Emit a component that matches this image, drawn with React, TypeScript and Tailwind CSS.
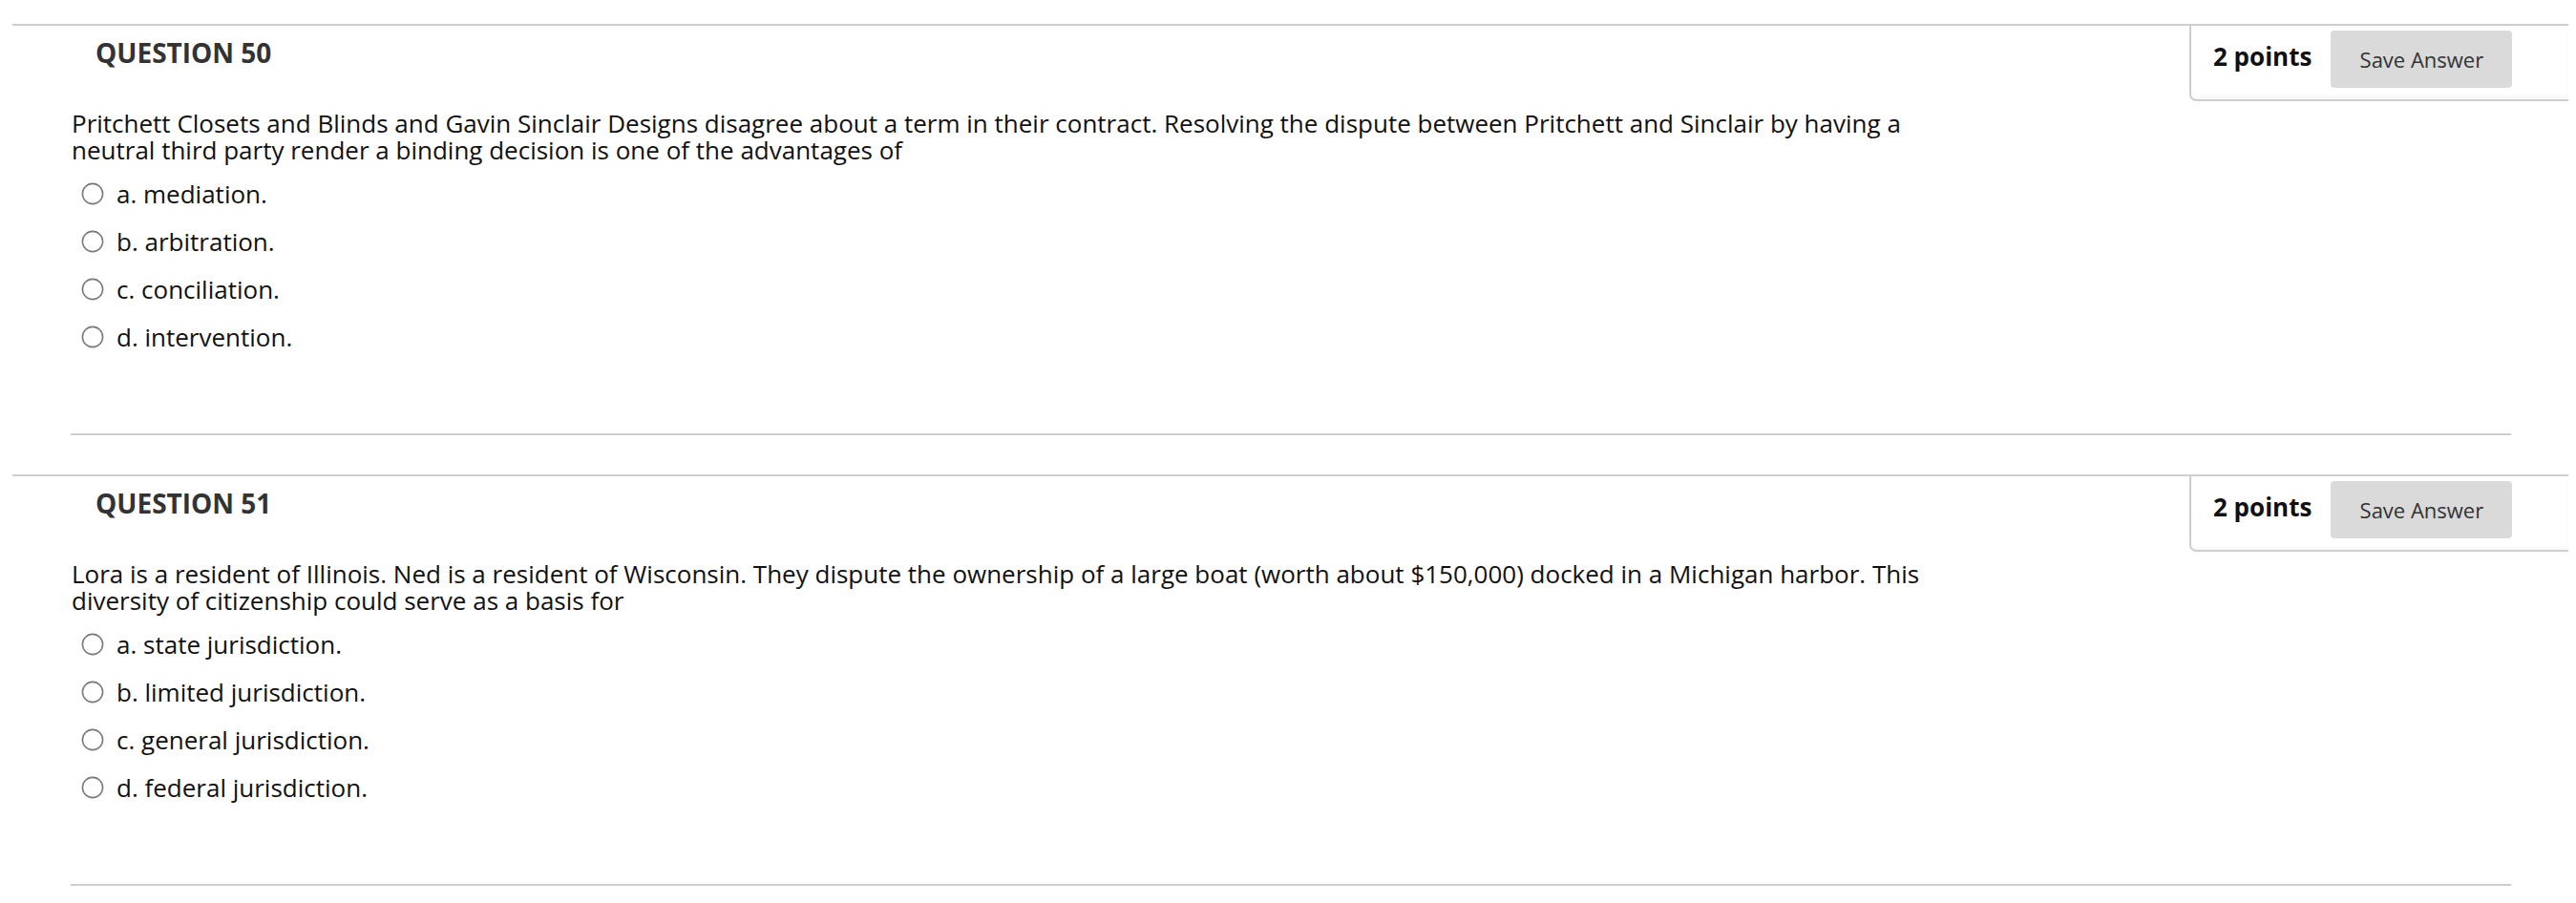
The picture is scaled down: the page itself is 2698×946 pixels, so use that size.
import React from "react";

type Q = { num: number; text: string; options: string[] };

const questions: Q[] = [
  {
    num: 50,
    text:
      "Pritchett Closets and Blinds and Gavin Sinclair Designs disagree about a term in their contract. Resolving the dispute between Pritchett and Sinclair by having a neutral third party render a binding decision is one of the advantages of",
    options: ["a. mediation.", "b. arbitration.", "c. conciliation.", "d. intervention."],
  },
  {
    num: 51,
    text:
      "Lora is a resident of Illinois. Ned is a resident of Wisconsin. They dispute the ownership of a large boat (worth about $150,000) docked in a Michigan harbor. This diversity of citizenship could serve as a basis for",
    options: [
      "a. state jurisdiction.",
      "b. limited jurisdiction.",
      "c. general jurisdiction.",
      "d. federal jurisdiction.",
    ],
  },
];

function Radio() {
  return (
    <svg width="24" height="24" viewBox="0 0 24 24" className="shrink-0">
      <circle cx="12" cy="12" r="10.6" fill="#ffffff" stroke="#7a7a7a" strokeWidth="1.6" />
    </svg>
  );
}

function Question({ q }: { q: Q }) {
  return (
    <div className="ml-[13px] w-[2677px] border-t-2 border-[#cecece] mb-[41px]">
      <div className="flex items-start justify-between">
        <h3 className="pl-[87px] pt-[14px] text-[28px] leading-[28px] font-bold text-[#333333]">
          QUESTION {q.num}
        </h3>
        <div className="w-[397px] h-[79px] border-l-2 border-b-2 border-[#cecece] rounded-bl-[7px] shadow-[inset_0_-3px_4px_rgba(0,0,0,0.03)] flex items-start pt-[5px] pl-[23px]">
          <span className="mt-[12px] text-[26px] leading-[30px] font-bold text-[#111111]">2 points</span>
          <button className="ml-[20px] w-[190px] h-[60px] rounded-[4px] bg-[#dadada] text-[22px] leading-[30px] text-[#333333]">
            Save Answer
          </button>
        </div>
      </div>
      <p className="mt-[9px] ml-[62px] max-w-[1965px] text-[26px] leading-[28px] text-[#111111]">
        {q.text}
      </p>
      <div className="mt-[7px] ml-[72px] flex flex-col">
        {q.options.map((o) => (
          <label key={o} className="h-[50px] flex items-center gap-[13px] text-[26px] leading-[28px] text-[#111111]">
            <Radio />
            <span>{o}</span>
          </label>
        ))}
      </div>
      <div className="mt-[76px] ml-[61px] w-[2556px] border-b-2 border-[#cecece]" />
    </div>
  );
}

export default function App() {
  return (
    <div
      className="w-[2698px] h-[946px] bg-white pt-[25px] overflow-hidden"
      style={{ fontFamily: '"Open Sans", "Noto Sans", sans-serif' }}
    >
      {questions.map((q) => (
        <Question key={q.num} q={q} />
      ))}
    </div>
  );
}
